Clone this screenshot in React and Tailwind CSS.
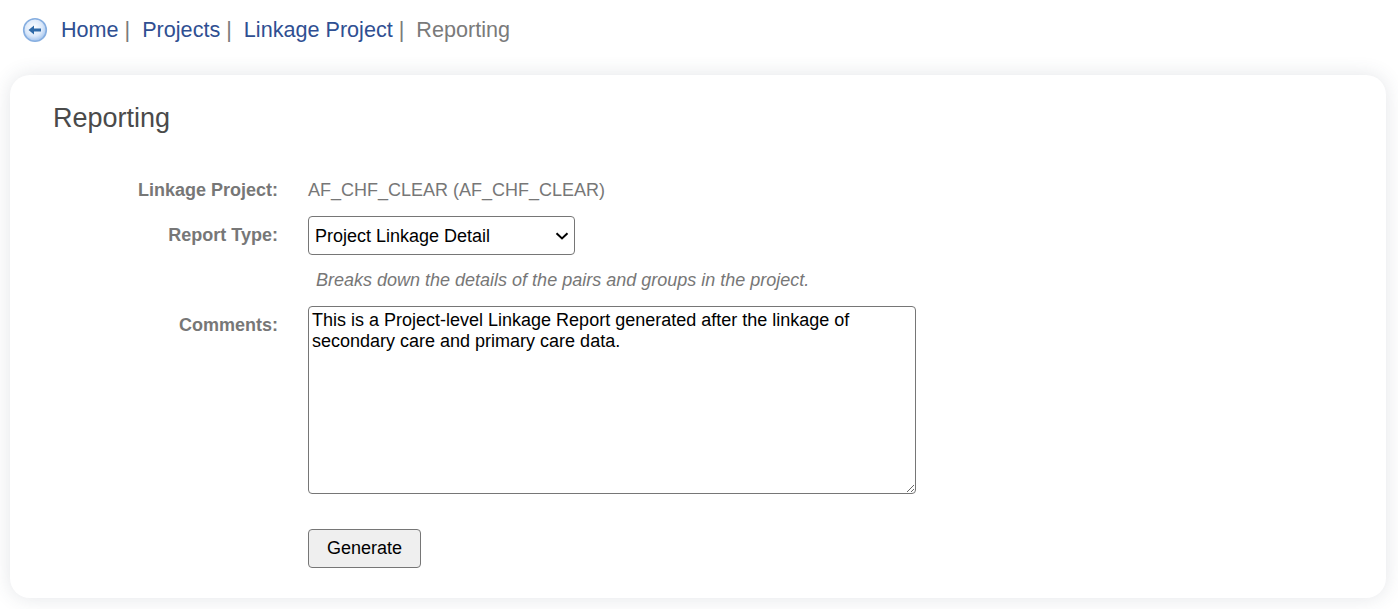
import React, { useState } from 'react';

const BackIcon = () => (
    <svg width="26" height="26" viewBox="0 0 26 26">
        <defs>
            <radialGradient id="backFill" cx="45%" cy="40%" r="62%">
                <stop offset="0%" stopColor="#ffffff" />
                <stop offset="60%" stopColor="#dce9fa" />
                <stop offset="100%" stopColor="#9dc0ec" />
            </radialGradient>
        </defs>
        <circle cx="13" cy="13" r="11.3" fill="url(#backFill)" stroke="#86aee0" strokeWidth="1.6" />
        <path d="M6.5 13 L12 8.6 L12 11.4 L19 11.4 L19 14.6 L12 14.6 L12 17.4 Z" fill="#2f6aa8" />
    </svg>
);

const ChevronIcon = () => (
    <svg width="14" height="8" viewBox="0 0 14 8" className="pointer-events-none absolute right-[6px] top-[16px]">
        <path d="M1.5 1.2 L7 6.4 L12.5 1.2" fill="none" stroke="#000000" strokeWidth="2" />
    </svg>
);

const crumbs = ['Home', 'Projects', 'Linkage Project'];

const App = () => {
    const [comments, setComments] = useState(
        'This is a Project-level Linkage Report generated after the linkage of secondary care and primary care data.'
    );

    return (
        <div className="h-[609px] overflow-hidden bg-white font-['Liberation_Sans',Arial,sans-serif]">
            {/* Breadcrumb */}
            <div className="flex h-[60px] items-center pl-[22px] text-[21.6px] text-[#7a7a7a]">
                <BackIcon />
                <div className="ml-[13px] flex items-center">
                    {crumbs.map(c => (
                        <span key={c} className="mr-[12px]">
                            <a className="text-[#2f4f92]">{c}</a> |
                        </span>
                    ))}
                    <span>Reporting</span>
                </div>
            </div>

            {/* Card */}
            <div className="ml-[10px] mr-[12px] mt-[15px] h-[523px] rounded-[20px] bg-white pl-[43px] pt-[27px] shadow-[0_0_20px_rgba(60,70,90,0.14)]">
                <h2 className="text-[27px] leading-[32px] text-[#4a4a4a]">Reporting</h2>

                <div className="mt-[44px] text-[18px] text-[#777777]">
                    <div className="flex h-[24px] items-center">
                        <label className="w-[225px] text-right font-bold">Linkage Project:</label>
                        <span className="ml-[30px]">AF_CHF_CLEAR (AF_CHF_CLEAR)</span>
                    </div>

                    <div className="mt-[14px] flex">
                        <label className="w-[225px] pt-[6px] text-right font-bold">Report Type:</label>
                        <div className="relative ml-[30px] h-[39px] w-[267px]">
                            <select className="h-full w-full appearance-none rounded-[4px] border border-[#767676] bg-white pl-[6px] pt-[2px] text-black">
                                <option>Project Linkage Detail</option>
                                <option>Project Linkage Summary</option>
                            </select>
                            <ChevronIcon />
                        </div>
                    </div>

                    <p className="ml-[263px] mt-[13px] h-[24px] italic leading-[24px]">
                        Breaks down the details of the pairs and groups in the project.
                    </p>

                    <div className="mt-[14px] flex">
                        <label className="w-[225px] pt-[6px] text-right font-bold">Comments:</label>
                        <textarea
                            value={comments}
                            onChange={e => setComments(e.target.value)}
                            className="ml-[30px] h-[188px] w-[608px] rounded-[4px] border border-[#767676] px-[3px] pb-[2px] pt-[3px] leading-[21px] text-black"
                        />
                    </div>

                    <button className="ml-[255px] mt-[35px] h-[39px] w-[113px] rounded-[4px] border border-[#767676] bg-[#efefef] text-black">
                        Generate
                    </button>
                </div>
            </div>
        </div>
    );
};

export default App;
